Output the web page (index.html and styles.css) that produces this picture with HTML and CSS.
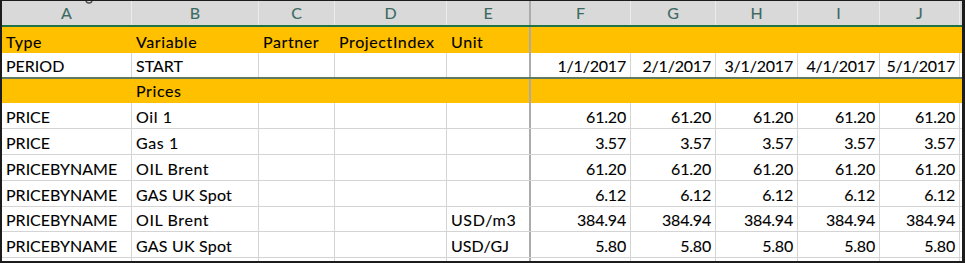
FILE: index.html
```html
<!DOCTYPE html>
<html>
<head>
<meta charset="utf-8">
<link rel="stylesheet" href="styles.css">
</head>
<body>
<div class="sheet">
  <svg class="mark" width="8" height="4" viewBox="0 0 8 4"><path d="M1 0 Q1 3 4 3 Q7 3 7 0" fill="none" stroke="#4a4a4a" stroke-width="1.4"/></svg>
  <div class="row hdr">
    <div class="c">A</div><div class="c">B</div><div class="c">C</div><div class="c">D</div><div class="c e">E</div>
    <div class="c">F</div><div class="c">G</div><div class="c">H</div><div class="c">I</div><div class="c">J</div><div class="c x"></div>
  </div>
  <div class="row org r1">
    <div class="c lc">Type</div><div class="c lc">Variable</div><div class="c lc">Partner</div><div class="c lc">ProjectIndex</div><div class="c e lc">Unit</div>
    <div class="c"></div><div class="c"></div><div class="c"></div><div class="c"></div><div class="c"></div><div class="c x"></div>
  </div>
  <div class="row wht r2">
    <div class="c">PERIOD</div><div class="c">START</div><div class="c"></div><div class="c"></div><div class="c e"></div>
    <div class="c n">1/1/2017</div><div class="c n">2/1/2017</div><div class="c n">3/1/2017</div><div class="c n">4/1/2017</div><div class="c n">5/1/2017</div><div class="c x"></div>
  </div>
  <div class="row org r3">
    <div class="c"></div><div class="c lc">Prices</div><div class="c"></div><div class="c"></div><div class="c e"></div>
    <div class="c"></div><div class="c"></div><div class="c"></div><div class="c"></div><div class="c"></div><div class="c x"></div>
  </div>
  <div class="row wht h26">
    <div class="c">PRICE</div><div class="c lc">Oil 1</div><div class="c"></div><div class="c"></div><div class="c e"></div>
    <div class="c n">61.20</div><div class="c n">61.20</div><div class="c n">61.20</div><div class="c n">61.20</div><div class="c n">61.20</div><div class="c x"></div>
  </div>
  <div class="row wht h26">
    <div class="c">PRICE</div><div class="c lc">Gas 1</div><div class="c"></div><div class="c"></div><div class="c e"></div>
    <div class="c n">3.57</div><div class="c n">3.57</div><div class="c n">3.57</div><div class="c n">3.57</div><div class="c n">3.57</div><div class="c x"></div>
  </div>
  <div class="row wht h26">
    <div class="c">PRICEBYNAME</div><div class="c lc">OIL Brent</div><div class="c"></div><div class="c"></div><div class="c e"></div>
    <div class="c n">61.20</div><div class="c n">61.20</div><div class="c n">61.20</div><div class="c n">61.20</div><div class="c n">61.20</div><div class="c x"></div>
  </div>
  <div class="row wht h26">
    <div class="c">PRICEBYNAME</div><div class="c lc2">GAS UK Spot</div><div class="c"></div><div class="c"></div><div class="c e"></div>
    <div class="c n">6.12</div><div class="c n">6.12</div><div class="c n">6.12</div><div class="c n">6.12</div><div class="c n">6.12</div><div class="c x"></div>
  </div>
  <div class="row wht h25">
    <div class="c">PRICEBYNAME</div><div class="c lc">OIL Brent</div><div class="c"></div><div class="c"></div><div class="c e lc">USD/m3</div>
    <div class="c n">384.94</div><div class="c n">384.94</div><div class="c n">384.94</div><div class="c n">384.94</div><div class="c n">384.94</div><div class="c x"></div>
  </div>
  <div class="row wht h26">
    <div class="c">PRICEBYNAME</div><div class="c lc2">GAS UK Spot</div><div class="c"></div><div class="c"></div><div class="c e">USD/GJ</div>
    <div class="c n">5.80</div><div class="c n">5.80</div><div class="c n">5.80</div><div class="c n">5.80</div><div class="c n">5.80</div><div class="c x"></div>
  </div>
  <div class="row tail">
    <div class="c"></div><div class="c"></div><div class="c"></div><div class="c"></div><div class="c e"></div>
    <div class="c"></div><div class="c"></div><div class="c"></div><div class="c"></div><div class="c"></div><div class="c x"></div>
  </div>
</div>
</body>
</html>
```

FILE: styles.css
```css
html, body {
  margin: 0;
  padding: 0;
  background: #ffffff;
}

.sheet {
  position: relative;
  box-sizing: border-box;
  width: 965px;
  height: 263px;
  border-top: 1px solid #1c1c1c;
  border-left: 2px solid #1c1c1c;
  border-right: 3px solid #1c1c1c;
  border-bottom: 2px solid #1c1c1c;
  background: #ffffff;
  overflow: hidden;
  font-family: "Lato", "Liberation Sans", sans-serif;
  font-size: 16px;
  color: #000000;
  -webkit-text-stroke: 0.1px currentColor;
}

.mark {
  position: absolute;
  left: 83px;
  top: -1px;
}

.row {
  display: grid;
  grid-template-columns: 130px 127px 76px 112px 84px 100px 85px 82px 82px 80px 2px;
  box-sizing: border-box;
}

.c {
  box-sizing: border-box;
  display: flex;
  align-items: flex-end;
  padding: 0 4px 1px 4px;
  line-height: 20px;
  white-space: nowrap;
  border-right: 1px solid #d4d4d4;
  overflow: visible;
}

.c.lc {
  letter-spacing: 0.6px;
}

.c.lc2 {
  letter-spacing: 0.2px;
}

.c.e {
  border-right: 2px solid #ababab;
}

.c.x {
  border-right: none;
  padding: 0;
}

.c.n {
  justify-content: flex-end;
  padding-right: 4px;
  letter-spacing: -0.2px;
}

.hdr {
  height: 26px;
  background: #d9d9d9;
  border-bottom: 2px solid #217346;
  color: #3b6a63;
}

.hdr .c {
  justify-content: center;
  border-right-color: #ebebeb;
  padding: 0 0 2px 0;
}

.hdr .c.e {
  border-right: 2px solid #ababab;
}

.org {
  background: #ffc000;
}

.org .c {
  border-right-color: #ffc000;
}

.org .c.e {
  border-right-color: #ababab;
}

.r1 {
  height: 26px;
}

.r3 {
  height: 24px;
}

.r3 .c {
  padding-bottom: 2px;
}

.r2 {
  height: 26px;
  border-bottom: 2px solid #5e7a62;
}

.wht {
  background: #ffffff;
}

.h26 {
  height: 26px;
  border-bottom: 1px solid #d4d4d4;
}

.h25 {
  height: 25px;
  border-bottom: 1px solid #d4d4d4;
}

.tail {
  height: 3px;
}
```
